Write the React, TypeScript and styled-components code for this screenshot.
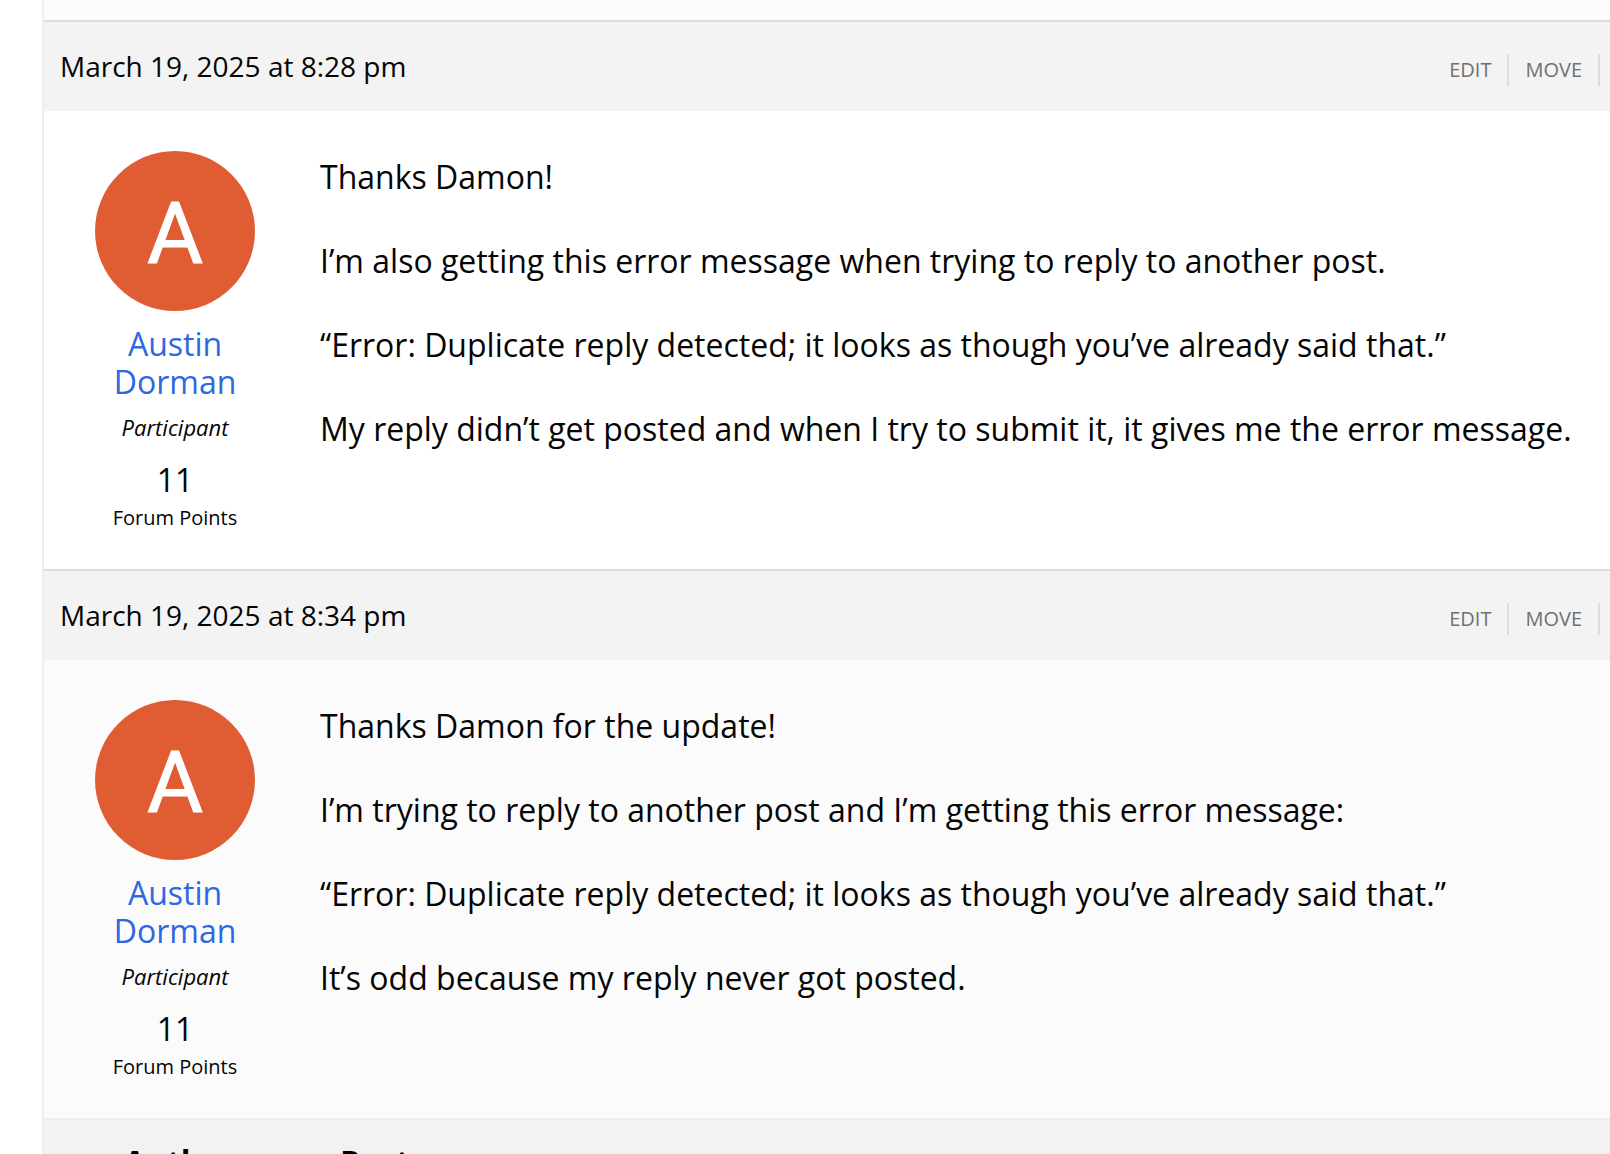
import React from "react";
import styled, { createGlobalStyle } from "styled-components";

const GlobalStyle = createGlobalStyle`
  *, *::before, *::after { box-sizing: border-box; }
  body {
    margin: 0;
    background: #ffffff;
    color: #050505;
    font-family: "Open Sans", "Noto Sans", sans-serif;
    font-size: 32px;
    line-height: 52px;
  }
`;

const Page = styled.main`
  height: 100vh;
  overflow: hidden;
  padding-left: 42px;
`;

const Thread = styled.section`
  border-left: 2px solid #eeeeee;
`;

const PreviousReply = styled.div`
  height: 20px;
  background: #fbfbfb;
`;

const ReplyHeader = styled.header`
  display: flex;
  align-items: baseline;
  justify-content: space-between;
  padding: 25px 10px 25px 16px;
  border-top: 2px solid #dddddd;
  background: #f3f3f3;
`;

const PostedAt = styled.time`
  font-size: 28px;
  line-height: 38px;
`;

const AdminLinks = styled.nav`
  display: flex;
`;

const AdminLink = styled.a`
  padding: 0 16px;
  border-right: 2px solid #dddddd;
  color: #707070;
  font-size: 20px;
  line-height: 32px;
  text-decoration: none;
  text-transform: uppercase;
`;

const ReplyBody = styled.div<{ $shaded?: boolean }>`
  display: grid;
  grid-template-columns: 160px 1fr;
  column-gap: 65px;
  padding: 40px 32px 37px 51px;
  background: ${(p) => (p.$shaded ? "#fbfbfb" : "#ffffff")};
`;

const Author = styled.div`
  display: flex;
  flex-direction: column;
  align-items: center;
  text-align: center;
`;

const Avatar = styled.svg`
  width: 160px;
  height: 160px;
  border-radius: 50%;
`;

const AuthorName = styled.a`
  margin-top: 14px;
  color: #2e67e2;
  line-height: 38px;
  text-decoration: none;
`;

const Role = styled.span`
  margin-top: 11px;
  font-size: 22px;
  font-style: italic;
  line-height: 30px;
`;

const Points = styled.span`
  margin-top: 19px;
  line-height: 38px;
`;

const PointsLabel = styled.span`
  margin-top: 5px;
  font-size: 20px;
  line-height: 28px;
`;

const Content = styled.div`
  display: flex;
  flex-direction: column;
  gap: 32px;
`;

const Paragraph = styled.p`
  margin: 0;
`;

const ListFooter = styled.footer`
  display: grid;
  grid-template-columns: 272px 1fr;
  column-gap: 24px;
  padding: 16px 0;
  border-top: 2px solid #eeeeee;
  background: #f2f2f2;
  color: #000000;
  font-weight: 700;
`;

const FooterAuthor = styled.div`
  text-align: center;
`;

type Reply = { id: string; postedAt: string; dateTime: string; paragraphs: string[] };

const replies: Reply[] = [
  {
    id: "reply-1",
    postedAt: "March 19, 2025 at 8:28 pm",
    dateTime: "2025-03-19T20:28",
    paragraphs: [
      "Thanks Damon!",
      "I’m also getting this error message when trying to reply to another post.",
      "“Error: Duplicate reply detected; it looks as though you’ve already said that.”",
      "My reply didn’t get posted and when I try to submit it, it gives me the error message.",
    ],
  },
  {
    id: "reply-2",
    postedAt: "March 19, 2025 at 8:34 pm",
    dateTime: "2025-03-19T20:34",
    paragraphs: [
      "Thanks Damon for the update!",
      "I’m trying to reply to another post and I’m getting this error message:",
      "“Error: Duplicate reply detected; it looks as though you’ve already said that.”",
      "It’s odd because my reply never got posted.",
    ],
  },
];

function InitialAvatar() {
  return (
    <Avatar viewBox="0 0 160 160" aria-hidden="true">
      <rect width="160" height="160" fill="#e05d34" />
      <text
        x="80"
        y="112"
        textAnchor="middle"
        fontFamily="Roboto, sans-serif"
        fontWeight="400"
        fontSize="86"
        fill="#ffffff"
        stroke="#ffffff"
        strokeWidth="1"
      >
        A
      </text>
    </Avatar>
  );
}

function ReplyItem({ reply, shaded }: { reply: Reply; shaded: boolean }) {
  return (
    <article id={reply.id}>
      <ReplyHeader>
        <PostedAt dateTime={reply.dateTime}>{reply.postedAt}</PostedAt>
        <AdminLinks>
          <AdminLink href={`#${reply.id}`}>Edit</AdminLink>
          <AdminLink href={`#${reply.id}`}>Move</AdminLink>
        </AdminLinks>
      </ReplyHeader>
      <ReplyBody $shaded={shaded}>
        <Author>
          <InitialAvatar />
          <AuthorName href="#austin-dorman">Austin Dorman</AuthorName>
          <Role>Participant</Role>
          <Points>11</Points>
          <PointsLabel>Forum Points</PointsLabel>
        </Author>
        <Content>
          {reply.paragraphs.map((text) => (
            <Paragraph key={text}>{text}</Paragraph>
          ))}
        </Content>
      </ReplyBody>
    </article>
  );
}

export default function App() {
  return (
    <>
      <GlobalStyle />
      <Page>
        <Thread>
          <PreviousReply />
          {replies.map((reply, index) => (
            <ReplyItem key={reply.id} reply={reply} shaded={index % 2 === 1} />
          ))}
          <ListFooter>
            <FooterAuthor>Author</FooterAuthor>
            <div>Posts</div>
          </ListFooter>
        </Thread>
      </Page>
    </>
  );
}
